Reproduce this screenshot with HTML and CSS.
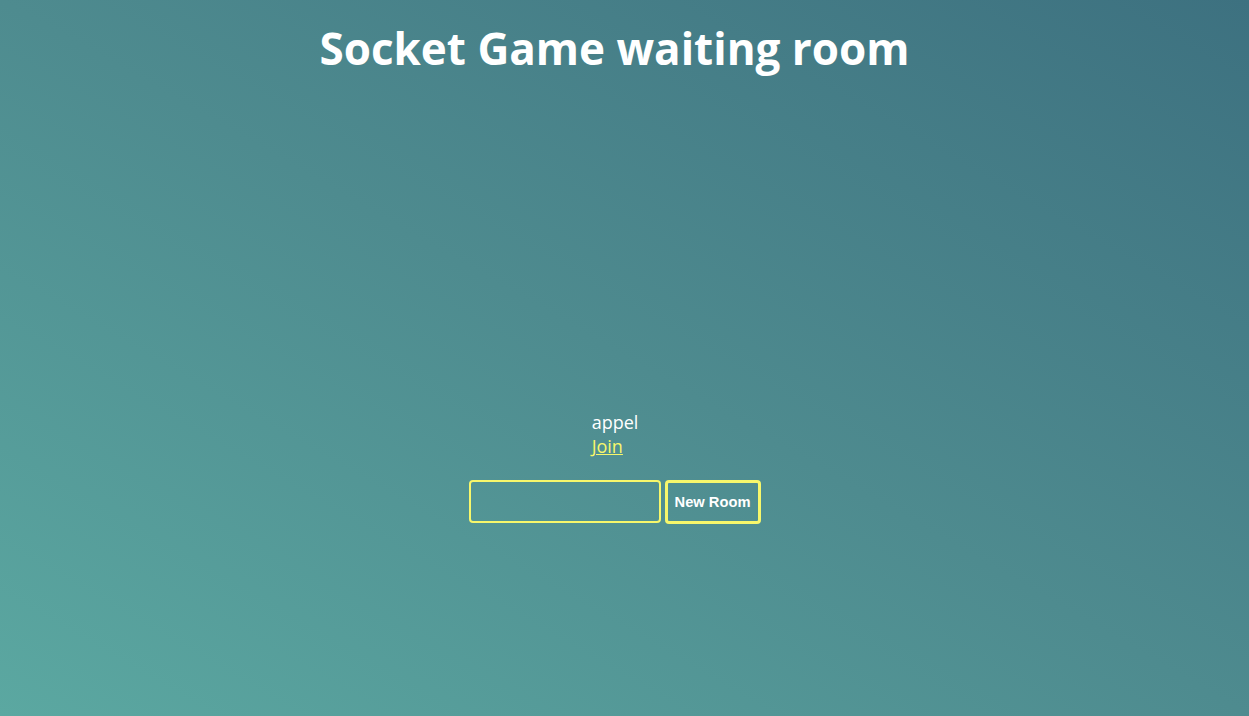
FILE: index.html
```html
<!DOCTYPE html>
<html>
<head>
<meta charset="utf-8">
<link rel="stylesheet" href="styles.css">
</head>
<body>
<div class="page">
  <h1 class="title">Socket Game waiting room</h1>
  <div class="rooms">
    <div class="room">
      <div class="room-name">appel</div>
      <a class="join" href="#">Join</a>
    </div>
  </div>
  <form class="new-room">
    <input class="room-input" type="text">
    <button class="room-btn" type="button">New Room</button>
  </form>
</div>
</body>
</html>
```

FILE: styles.css
```css
html, body {
  margin: 0;
  height: 100%;
}
body {
  background: linear-gradient(to top right, #5ba8a1 0%, #4e8b8f 50%, #3d7180 100%);
  font-family: "Open Sans", sans-serif;
  color: #fff;
}
.page {
  height: 100%;
  box-sizing: border-box;
  padding-right: 20px;
  display: flex;
  flex-direction: column;
  align-items: center;
}
.title {
  font-size: 44px;
  font-weight: 700;
  margin: 18px 0 0;
  line-height: 60px;
}
.rooms {
  margin-top: 332px;
  padding-left: 1px;
}
.room-name {
  font-size: 18px;
  line-height: 24px;
}
.join {
  font-size: 18px;
  line-height: 24px;
  color: #f7f76b;
}
.new-room {
  margin-top: 22px;
  display: flex;
  gap: 4px;
}
.room-input {
  width: 192px;
  height: 43px;
  box-sizing: border-box;
  border: 2px solid #f7f76b;
  border-radius: 4px;
  background: transparent;
  padding: 0 8px;
  color: #fff;
  outline: none;
}
.room-btn {
  width: 96px;
  height: 44px;
  box-sizing: border-box;
  border: 3px solid #f7f76b;
  border-radius: 4px;
  background: transparent;
  color: #fff;
  font-family: "Liberation Sans", Arial, sans-serif;
  font-weight: 700;
  font-size: 14.7px;
  padding: 0;
}
```
